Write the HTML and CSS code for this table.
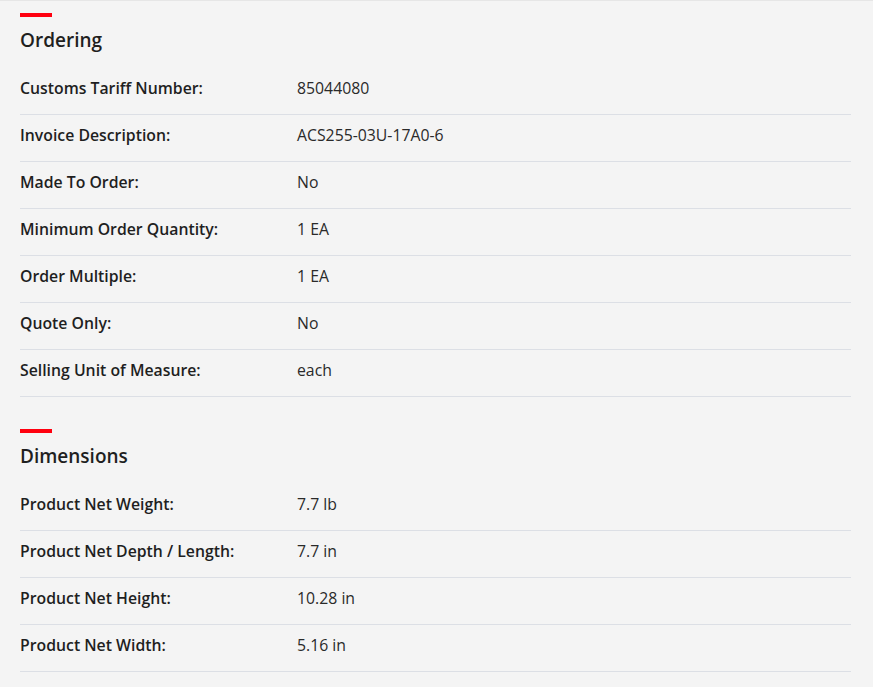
FILE: index.html
```html
<!DOCTYPE html>
<html lang="en">
<head>
<meta charset="utf-8">
<title>Product details</title>
<link rel="stylesheet" href="styles.css">
</head>
<body>
<main class="page">
  <section class="group">
    <div class="accent"></div>
    <h2 class="group-title">Ordering</h2>
    <dl class="specs">
      <div class="row"><dt>Customs Tariff Number:</dt><dd>85044080</dd></div>
      <div class="row"><dt>Invoice Description:</dt><dd>ACS255-03U-17A0-6</dd></div>
      <div class="row"><dt>Made To Order:</dt><dd>No</dd></div>
      <div class="row"><dt>Minimum Order Quantity:</dt><dd>1 EA</dd></div>
      <div class="row"><dt>Order Multiple:</dt><dd>1 EA</dd></div>
      <div class="row"><dt>Quote Only:</dt><dd>No</dd></div>
      <div class="row"><dt>Selling Unit of Measure:</dt><dd>each</dd></div>
    </dl>
  </section>
  <section class="group">
    <div class="accent"></div>
    <h2 class="group-title">Dimensions</h2>
    <dl class="specs">
      <div class="row"><dt>Product Net Weight:</dt><dd>7.7 lb</dd></div>
      <div class="row"><dt>Product Net Depth / Length:</dt><dd>7.7 in</dd></div>
      <div class="row"><dt>Product Net Height:</dt><dd>10.28 in</dd></div>
      <div class="row"><dt>Product Net Width:</dt><dd>5.16 in</dd></div>
    </dl>
  </section>
</main>
</body>
</html>
```

FILE: styles.css
```css
html, body {
  margin: 0;
  padding: 0;
  background: #f4f4f4;
}
body {
  font-family: "Open Sans", "Noto Sans", sans-serif;
  color: #262626;
  border-top: 1px solid #e6e6e6;
}
.page {
  padding: 12px 22px 0 20px;
}
.group + .group {
  margin-top: 32px;
}
.accent {
  width: 32px;
  height: 4px;
  background: #ff000f;
}
.group-title {
  margin: 11px 0 16px;
  font-size: 19px;
  line-height: 24px;
  font-weight: 600;
  color: #1f1f1f;
}
.specs {
  margin: 0;
}
.row {
  display: grid;
  grid-template-columns: 277px 1fr;
  align-items: center;
  height: 40px;
  padding-bottom: 6px;
  border-bottom: 1px solid #dcdfe5;
}
.row dt {
  font-size: 15.8px;
  font-weight: 600;
  color: #1f1f1f;
}
.row dd {
  margin: 0;
  font-size: 15.8px;
  color: #2a2a2a;
}
```
